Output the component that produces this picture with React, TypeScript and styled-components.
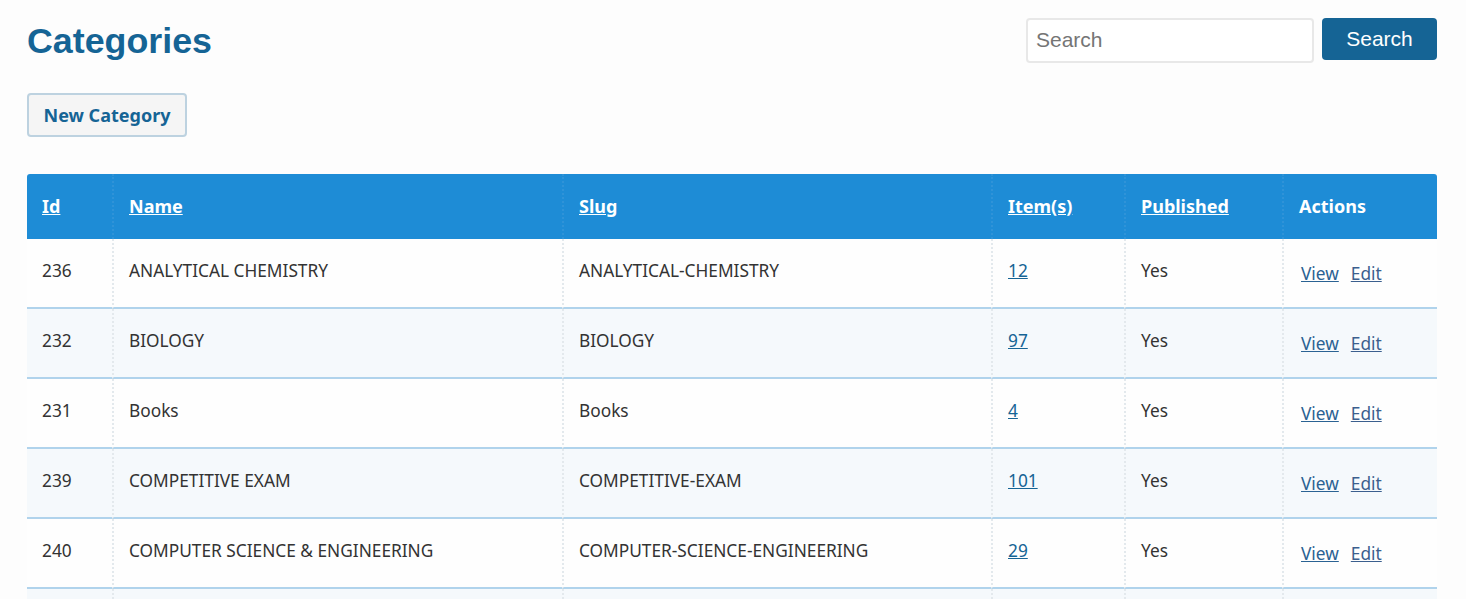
import React from "react";
import styled, { createGlobalStyle } from "styled-components";

const GlobalStyle = createGlobalStyle`
  html, body {
    margin: 0;
    height: 599px;
    overflow: hidden;
    background: #fdfdfd;
    font-family: "Noto Sans", "DejaVu Sans", sans-serif;
  }
`;

const Page = styled.div`
  padding: 18px 29px 0 27px;
`;

const TopBar = styled.div`
  display: flex;
  justify-content: space-between;
  align-items: flex-start;
`;

const Title = styled.h1`
  margin: 0;
  padding-top: 1px;
  font-family: "Liberation Sans", Arial, sans-serif;
  font-size: 35.8px;
  line-height: 44px;
  font-weight: 700;
  color: #156495;
`;

const SearchForm = styled.form`
  display: flex;
  gap: 8px;
  align-items: flex-start;
`;

const SearchInput = styled.input`
  box-sizing: border-box;
  width: 288px;
  height: 45px;
  padding: 0 8px 2px;
  border: 2px solid #e8e8e8;
  border-radius: 4px;
  background: #fff;
  font-family: "Liberation Sans", Arial, sans-serif;
  font-size: 21px;
  color: #333;
  &::placeholder {
    color: #757575;
    opacity: 1;
  }
`;

const SearchButton = styled.button`
  box-sizing: border-box;
  width: 115px;
  height: 42px;
  border: 0;
  border-radius: 4px;
  background: #156495;
  color: #fff;
  font-family: "Liberation Sans", Arial, sans-serif;
  font-size: 21px;
`;

const NewButton = styled.button`
  display: block;
  box-sizing: border-box;
  width: 160px;
  height: 44px;
  margin-top: 30px;
  padding: 0;
  border: 2px solid #bdd2e0;
  border-radius: 4px;
  background: #f5f5f5;
  color: #156495;
  font-family: "Noto Sans", sans-serif;
  font-size: 18px;
  font-weight: 700;
`;

const Table = styled.table`
  width: 1410px;
  margin-top: 37px;
  border-collapse: separate;
  border-spacing: 0;
  table-layout: fixed;
  font-size: 17.3px;
  color: #333;
`;

const HeadCell = styled.th<{ $w: number }>`
  box-sizing: border-box;
  width: ${(p) => p.$w}px;
  height: 65px;
  padding: 0 0 2px 15px;
  background: #1e8cd6;
  color: #fff;
  font-size: 18px;
  font-weight: 700;
  text-align: left;
  border-left: 2px dotted #2f93d8;
  &:first-child {
    border-left: 0;
    border-top-left-radius: 3px;
  }
  &:last-child {
    border-top-right-radius: 3px;
  }
  a {
    color: #fff;
    text-decoration: underline;
  }
`;

const Row = styled.tr<{ $striped: boolean }>`
  background: ${(p) => (p.$striped ? "#f5f9fc" : "#fefefe")};
`;

const Cell = styled.td`
  box-sizing: border-box;
  height: 70px;
  padding: 0 0 6px 15px;
  border-bottom: 2px solid #b0d3ec;
  border-left: 2px dotted #e3e9ed;
  &:first-child {
    border-left: 0;
  }
`;

const ActionCell = styled(Cell)`
  padding: 0 0 0 17px;
`;

const ItemLink = styled.a`
  color: #156495;
  text-decoration: underline;
`;

const ActionLink = styled.a<{ $muted?: boolean }>`
  color: ${(p) => (p.$muted ? "#3b5f8e" : "#2a6293")};
  text-decoration: underline;
  margin-right: 12px;
`;

const columns = [
  { label: "Id", w: 85, link: true },
  { label: "Name", w: 450, link: true },
  { label: "Slug", w: 429, link: true },
  { label: "Item(s)", w: 133, link: true },
  { label: "Published", w: 158, link: true },
  { label: "Actions", w: 155, link: false },
];

const rows = [
  { id: 236, name: "ANALYTICAL CHEMISTRY", slug: "ANALYTICAL-CHEMISTRY", items: 12 },
  { id: 232, name: "BIOLOGY", slug: "BIOLOGY", items: 97 },
  { id: 231, name: "Books", slug: "Books", items: 4 },
  { id: 239, name: "COMPETITIVE EXAM", slug: "COMPETITIVE-EXAM", items: 101 },
  { id: 240, name: "COMPUTER SCIENCE & ENGINEERING", slug: "COMPUTER-SCIENCE-ENGINEERING", items: 29 },
];

const App = () => {
  return (
    <Page>
      <GlobalStyle />
      <TopBar>
        <Title>Categories</Title>
        <SearchForm>
          <SearchInput placeholder="Search" />
          <SearchButton type="button">Search</SearchButton>
        </SearchForm>
      </TopBar>
      <NewButton type="button">New Category</NewButton>
      <Table>
        <thead>
          <tr>
            {columns.map((c) => (
              <HeadCell key={c.label} $w={c.w}>
                {c.link ? <a href="#">{c.label}</a> : c.label}
              </HeadCell>
            ))}
          </tr>
        </thead>
        <tbody>
          {rows.map((r, i) => (
            <Row key={r.id} $striped={i % 2 === 1}>
              <Cell>{r.id}</Cell>
              <Cell>{r.name}</Cell>
              <Cell>{r.slug}</Cell>
              <Cell>
                <ItemLink href="#">{r.items}</ItemLink>
              </Cell>
              <Cell>Yes</Cell>
              <ActionCell>
                <ActionLink href="#">View</ActionLink>
                <ActionLink href="#" $muted>Edit</ActionLink>
              </ActionCell>
            </Row>
          ))}
          <Row $striped>
            <Cell />
            <Cell />
            <Cell />
            <Cell />
            <Cell />
            <Cell />
          </Row>
        </tbody>
      </Table>
    </Page>
  );
};

export default App;
